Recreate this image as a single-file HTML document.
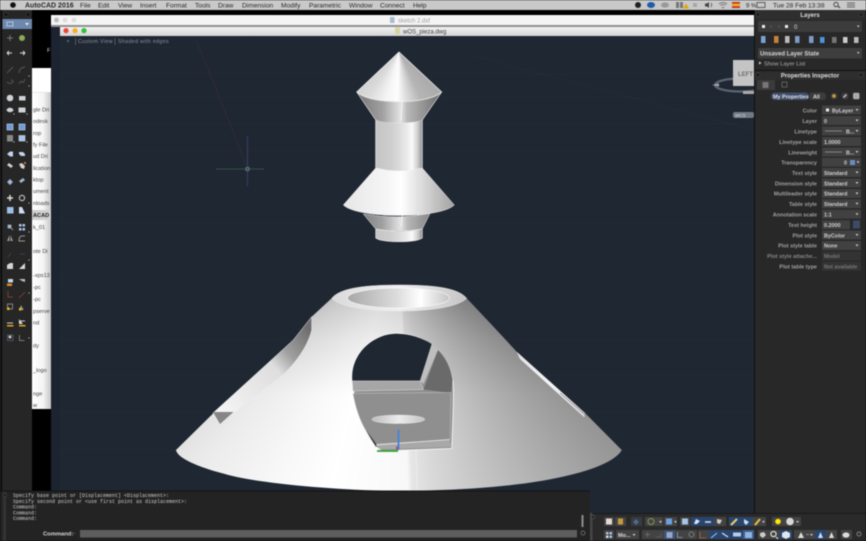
<!DOCTYPE html>
<html><head><meta charset="utf-8"><style>
html,body{margin:0;padding:0;width:866px;height:541px;overflow:hidden;background:#000}
#w{position:absolute;left:0;top:0;width:866px;height:541px;overflow:hidden;filter:blur(.4px);font-family:"Liberation Sans",sans-serif}
.a{position:absolute;left:0;top:0;width:866px;height:541px}
svg{display:block}
text{font-family:"Liberation Sans",sans-serif}
</style></head><body><div id="w">
<svg class="a" width="866" height="541" viewBox="0 0 866 541">
<defs>
<linearGradient id="side" x1="0" x2="1" y1="0" y2="0"><stop offset="0" stop-color="#fff"/><stop offset=".6" stop-color="#f4f4f4"/><stop offset="1" stop-color="#c4c4c4"/></linearGradient>
<linearGradient id="tb" x1="0" x2="0" y1="0" y2="1"><stop offset="0" stop-color="#f2f2f2"/><stop offset="1" stop-color="#d4d4d4"/></linearGradient>
</defs>
<rect width="866" height="541" fill="#000"/>
<!-- menu bar -->
<rect width="866" height="10" fill="#c9c9c9"/>
<g font-size="6.6" fill="#2a2a2a">
<circle cx="13" cy="5" r="2.8" fill="#111"/>
<text x="25" y="7.5" font-weight="bold" font-size="7">AutoCAD 2016</text>
<text x="80" y="7.5">File</text><text x="98" y="7.5">Edit</text><text x="118" y="7.5">View</text><text x="140" y="7.5">Insert</text><text x="166" y="7.5">Format</text><text x="195" y="7.5">Tools</text><text x="218" y="7.5">Draw</text><text x="242" y="7.5">Dimension</text><text x="281" y="7.5">Modify</text><text x="309" y="7.5">Parametric</text><text x="349" y="7.5">Window</text><text x="380" y="7.5">Connect</text><text x="413" y="7.5">Help</text>
<text x="746" y="7.5" font-size="6">9 %</text><text x="773" y="7.5">Tue 28 Feb</text><text x="808" y="7.5">13:38</text>
</g>
<circle cx="638" cy="5" r="3" fill="#222"/><ellipse cx="651" cy="5" rx="4" ry="3" fill="#1d5fa8"/><ellipse cx="665" cy="5" rx="4" ry="2.6" fill="#999"/>
<rect x="676" y="2" width="3" height="6" fill="#777"/><rect x="680" y="2" width="3" height="6" fill="#777"/><path d="M683 8.5L686 3.5 689 8.5Z" fill="#e0a800"/>
<path d="M693 4h4M693 6h4" stroke="#888"/><path d="M705 3.5h2l2-1.5v6l-2-1.5h-2z" fill="#444"/><path d="M711 3q1.5 2 0 4" fill="none" stroke="#444" stroke-width=".7"/>
<path d="M719 4q4-3 8 0M720.5 5.5q2.5-2 5 0M722 7l1 1 1-1" fill="none" stroke="#666" stroke-width=".8"/>
<rect x="732" y="2" width="8" height="6" fill="#c8302a"/><rect x="732" y="3.7" width="8" height="2.5" fill="#e8b820"/>
<rect x="757" y="2.5" width="8" height="5" fill="none" stroke="#444" stroke-width=".8"/>
<circle cx="836" cy="4.5" r="2.2" fill="none" stroke="#333" stroke-width=".8"/><path d="M838 6l2 2" stroke="#333"/><path d="M847 3h8M847 5h8M847 7h8" stroke="#666"/>
<!-- left sidebar window -->
<rect x="32" y="68" width="19" height="341" fill="url(#side)"/>
<rect x="32" y="68" width="19" height="24" fill="#fff"/><rect x="32" y="92" width="19" height=".6" fill="#ddd"/>
<rect x="32" y="210" width="19" height="10" fill="#d0d0d0"/>
<text x="47" y="52" font-size="5.500" fill="#ddd">F</text>
<g font-size="5.600" fill="#444">
<text x="33" y="111.500">gle Dri</text><text x="33" y="123">odesk</text><text x="33" y="135">rop</text><text x="33" y="146.500">fy File</text><text x="33" y="158">ud Dri</text><text x="33" y="170">lication</text><text x="33" y="181.500">ktop</text><text x="33" y="193">ument</text><text x="33" y="205">nloads</text><text x="33" y="217" fill="#222" font-weight="bold">ACAD</text><text x="33" y="229">k_01</text><text x="33" y="253">ote Di</text><text x="33" y="277">-xps13</text><text x="33" y="289">-pc</text><text x="33" y="301">-pc</text><text x="33" y="313">pserve</text><text x="33" y="324.500">nd</text><text x="33" y="347.500">dy</text><text x="33" y="372">_logo</text><text x="33" y="395.500">nge</text><text x="33" y="407">w</text>
</g>
<!-- canvas -->
<rect x="51" y="36" width="703" height="477" fill="#1f2733"/>
<rect x="51" y="15" width="9" height="476" fill="#1b2430"/>
<rect x="51" y="15" width="703" height="10" fill="#f4f4f4"/>
<rect x="51" y="25" width="703" height="2" fill="#8f8f8f"/>
<rect x="60" y="27" width="694" height="9" fill="url(#tb)"/>
<circle cx="56.500" cy="20" r="2.400" fill="#bbb"/><circle cx="65" cy="20" r="2.400" fill="#ddd"/><circle cx="74" cy="20" r="2.400" fill="#ddd"/>
<circle cx="66" cy="30.600" r="2.600" fill="#f0443c"/><circle cx="75" cy="30.600" r="2.600" fill="#f5b021"/><circle cx="84" cy="30.600" r="2.600" fill="#2fc23c"/>
<rect x="390" y="17" width="4.500" height="6" fill="#a9bccb"/>
<text x="398" y="22.300" font-size="6" fill="#a0a0a0">sketch 2.dxf</text>
<rect x="395" y="27.500" width="5" height="6.500" fill="#d8d2a0"/>
<text x="403" y="33.400" font-size="6" fill="#444">wOS_pieza.dwg</text>
<g stroke="#27303c" stroke-width=".5"><path d="M60 48H754M60 74H754M60 98H754M60 124H754M60 150H754M60 222H754M60 340H754M60 375H754M60 412H754M60 450H754M470 55L754 130M60 280H754"/></g>
<path d="M196 40Q225 110 246 165" stroke="#3a2b33" fill="none" stroke-width=".7"/>
<g font-size="5.300" fill="#8e949c" letter-spacing=".35"><text x="78" y="43">Custom View</text><text x="118" y="43">Shaded with edges</text></g>
<path d="M66.500 41h3M68 39.500v3M75.500 38v7M115 38v7" stroke="#777" stroke-width=".6"/>
<path d="M216 169H264" stroke="#3c5c47" stroke-width=".7"/><path d="M247.500 136V186" stroke="#3a4a76" stroke-width=".8"/><rect x="246" y="167.500" width="3" height="3" fill="none" stroke="#aab" stroke-width=".5"/>
<!-- view cube -->
<ellipse cx="740" cy="85" rx="25" ry="6.500" fill="none" stroke="#5d6570" stroke-width="2.200"/>
<path d="M712 85l7-1.500v3z" fill="#aaa"/><rect x="743" y="91" width="11" height="3" fill="#aaa"/>
<rect x="733" y="60" width="21" height="26" fill="#c4c4c4"/>
<text x="745.500" y="76" font-size="6" font-weight="bold" fill="#6e6e6e" text-anchor="middle">LEFT</text>
<rect x="733" y="112" width="21" height="6" rx="2" fill="#707a84"/><text x="735" y="117" font-size="4.500" fill="#ddd">WCS</text>
<!-- left toolbar -->
<rect x="2" y="10" width="30" height="481" fill="#262626"/>
<rect x="0" y="10" width="1" height="481" fill="#2a2a2a"/>
<circle cx="6" cy="14.500" r="2" fill="#111" stroke="#444" stroke-width=".5"/><circle cx="28" cy="14.500" r="2" fill="#111" stroke="#444" stroke-width=".5"/>
<rect x="2.500" y="19" width="29.500" height="10" fill="#6d87ad"/><rect x="7" y="22" width="6" height="4" fill="none" stroke="#cde" stroke-width=".7"/><path d="M25 23h4l-2 2.500z" fill="#eee"/>
<g fill="none" stroke-width="1">
<path d="M7 38h6M10 35v6" stroke="#777"/><circle cx="22" cy="38" r="3" fill="#8ea85c"/>
<path d="M7 53h5M7 53l2-2M7 53l2 2" stroke="#ddd"/><path d="M25 53h-5M25 53l-2-2M25 53l-2 2" stroke="#ddd"/>
<path d="M7 73l6-6M19 73q0-5 6-6M7 82q3 3 6 0 0-2-2-2M19 84q2-4 3-2t3-3" stroke="#555"/>
</g>
<g fill="#cfd3d8"><circle cx="10" cy="98" r="3.300"/><rect x="19" y="96" width="6.500" height="4.500"/><ellipse cx="10" cy="110" rx="3.400" ry="2.200"/><rect x="18.500" y="107.500" width="7" height="5"/></g>
<g fill="#6f9bd6" stroke="#c7dbf2" stroke-width=".6"><rect x="7" y="124" width="6" height="6"/><rect x="19" y="124" width="6" height="6"/><rect x="19" y="135.500" width="6" height="5.500" fill="#a8c4e6"/></g>
<rect x="7" y="135" width="6" height="6.500" fill="#888"/>
<path d="M7 154l3-2.500h3v5h-3zM19 152h4l2 2v2h-4l-2-2z" fill="#c2d3ea"/><path d="M7 165l2-2 4 3-2 2zM19 164l3-1 3 3-1 3-3-1z" fill="#d0d0d0"/><circle cx="25" cy="163" r="1" fill="#d89a2a"/>
<path d="M7 182l3-3 3 3-3 3zM19 181l4-3 2 2-4 3z" fill="#9fb6d4"/>
<path d="M10 195v6M7 198h6" stroke="#ddd" stroke-width="1.500"/><circle cx="22" cy="198" r="2.600" fill="none" stroke="#bbb" stroke-width="1.200"/>
<rect x="7" y="207" width="6.500" height="6.500" fill="#9cc0e6"/><path d="M19 207h3l3 6.500h-6z" fill="#cfdced"/>
<path d="M8 225h3v3H8zM11 228l2 2" stroke="#ccc" fill="#8fb4dc" stroke-width=".6"/><g fill="#a9c6ea"><rect x="19" y="224" width="2.500" height="2.500"/><rect x="22.500" y="224" width="2.500" height="2.500"/><rect x="19" y="228" width="2.500" height="2.500"/><rect x="22.500" y="228" width="2.500" height="2.500"/></g>
<path d="M7 241l2.500-6v6zM10.500 241v-6l2.500 6z" fill="#999"/><path d="M25 236h-3q-3 0-3 5h6" fill="none" stroke="#999"/>
<path d="M8 257l3-4M20 254h5" stroke="#30415c"/>
<path d="M7 269v-4l3-2h3v6z" fill="#d4d4d4"/><path d="M19 269l6-6v6z" fill="#dadada"/>
<rect x="8" y="279" width="5" height="3.500" fill="#c8d6ea"/><rect x="7" y="283.500" width="5" height="2.500" fill="#dd8a28"/><path d="M19 279h6v3l-3-1z" fill="#bbb"/>
<path d="M8 291v6h5" stroke="#7a3a34" fill="none"/><path d="M19 298l6-6" stroke="#7a3a34"/>
<rect x="7.500" y="304" width="5" height="5" fill="none" stroke="#aaa" stroke-width=".7"/><rect x="7" y="307.500" width="2.500" height="2.500" fill="#ecb91e"/><path d="M19 310l2-5 3 5z" fill="#888"/><rect x="19" y="308" width="2.500" height="2.500" fill="#ecb91e"/>
<path d="M7 323h6M19 321h6" stroke="#ccc"/><rect x="7" y="325" width="6.500" height="1.500" fill="#e8a41c"/><rect x="19" y="325" width="6.500" height="1.500" fill="#e8a41c"/><path d="M19 324v-5l4 5z" fill="#ddd"/>
<rect x="7.500" y="335" width="5.500" height="5.500" fill="none" stroke="#667" stroke-width=".7"/><circle cx="10" cy="337" r="1.500" fill="#bcd"/><path d="M19.500 335v5.500h5" fill="none" stroke="#777"/>
<g fill="#ccc"><circle cx="29" cy="76" r=".6"/><circle cx="29" cy="86" r=".6"/><circle cx="14" cy="114" r=".6"/><circle cx="27" cy="114" r=".6"/><circle cx="14" cy="142" r=".6"/><circle cx="27" cy="142" r=".6"/><circle cx="29" cy="203" r=".6"/><circle cx="29" cy="232" r=".6"/><circle cx="29" cy="260" r=".6"/><circle cx="29" cy="293" r=".6"/><circle cx="29" cy="338" r=".6"/></g>
</svg>

<!-- conic shaded cones -->
<div class="a" style="clip-path:path('M399 52L441.700 92C428 105 370 105 356.700 92Z');background:conic-gradient(from 130deg at 399px 52px,#a9a9a9 0deg,#b5b5b5 25deg,#e0e0e0 42deg,#fdfdfd 52deg,#f5f5f5 65deg,#dadada 85deg,#d0d0d0 100deg)"></div>
<div class="a" style="clip-path:path('M331.700 298.300L311.700 316.700L293.300 340L213.300 413.300L176 450C177 456 190 466 237 477C270 484 340 490.700 400 490.700C470 490.700 530 485 570 475C600 468 618 458 621.700 450L585 413L516.700 351.700L490 323L466.700 298.300Z');background:linear-gradient(180deg,rgba(0,0,0,.16) 295px,rgba(0,0,0,.07) 340px,rgba(0,0,0,0) 395px),conic-gradient(from 130deg at 399px 232px,#8d8d8d 0deg,#a2a2a2 12deg,#bebebe 28deg,#d8d8d8 42deg,#e6e6e6 47deg,#f8f8f8 48deg,#fff 65deg,#f9f9f9 75deg,#ececec 90deg,#dcdcdc 100deg)"></div>

<svg class="a" width="866" height="541" viewBox="0 0 866 541">
<defs>
<linearGradient id="cyl" gradientUnits="userSpaceOnUse" x1="375.700" x2="422.300" y1="0" y2="0"><stop offset="0" stop-color="#c4c4c4"/><stop offset=".35" stop-color="#cfcfcf"/><stop offset=".65" stop-color="#e8e8e8"/><stop offset=".78" stop-color="#fafafa"/><stop offset=".9" stop-color="#cfcfcf"/><stop offset="1" stop-color="#8f8f8f"/></linearGradient>
<linearGradient id="dk" gradientUnits="userSpaceOnUse" x1="357" x2="441" y1="0" y2="0"><stop offset="0" stop-color="#777"/><stop offset=".3" stop-color="#a0a0a0"/><stop offset=".52" stop-color="#e4e4e4"/><stop offset=".6" stop-color="#b8b8b8"/><stop offset="1" stop-color="#6c6c6c"/></linearGradient>
<linearGradient id="wd" gradientUnits="userSpaceOnUse" x1="343" x2="455" y1="0" y2="0"><stop offset="0" stop-color="#e6e6e6"/><stop offset=".4" stop-color="#f6f6f6"/><stop offset=".52" stop-color="#fff"/><stop offset=".72" stop-color="#d8d8d8"/><stop offset="1" stop-color="#a0a0a0"/></linearGradient>
<linearGradient id="hole" gradientUnits="userSpaceOnUse" x1="348" x2="449" y1="0" y2="0"><stop offset="0" stop-color="#a8a8a8"/><stop offset=".5" stop-color="#dedede"/><stop offset=".72" stop-color="#fff"/><stop offset="1" stop-color="#c4c4c4"/></linearGradient>
<linearGradient id="top" gradientUnits="userSpaceOnUse" x1="332" x2="467" y1="0" y2="0"><stop offset="0" stop-color="#dadada"/><stop offset=".5" stop-color="#f0f0f0"/><stop offset="1" stop-color="#c4c4c4"/></linearGradient>
<linearGradient id="el" gradientUnits="userSpaceOnUse" x1="372" x2="425" y1="0" y2="0"><stop offset="0" stop-color="#bdbdbd"/><stop offset=".5" stop-color="#ececec"/><stop offset="1" stop-color="#c2c2c2"/></linearGradient>
<linearGradient id="sl" gradientUnits="userSpaceOnUse" x1="215" x2="310" y1="415" y2="330"><stop offset="0" stop-color="#f6f6f6"/><stop offset=".6" stop-color="#dedede"/><stop offset=".75" stop-color="#a0a0a0"/><stop offset="1" stop-color="#6e6e6e"/></linearGradient>
<linearGradient id="rs" gradientUnits="userSpaceOnUse" x1="517" x2="585" y1="352" y2="416"><stop offset="0" stop-color="#e2e2e2"/><stop offset=".5" stop-color="#f4f4f4"/><stop offset="1" stop-color="#d6d6d6"/></linearGradient>
</defs>
<!-- upper part edges & cylinders -->
<path d="M399 52L441.700 92C428 105 370 105 356.700 92Z" fill="none" stroke="#f4f4f4" stroke-width=".7"/>
<path d="M356.700 92C370 105 428 105 441.700 92L422.300 120C415 124 383 124 375.700 120Z" fill="url(#dk)" stroke="#ededed" stroke-width=".6"/>
<path d="M375.700 120C383 124 415 124 422.300 120V170Q399 176 375.700 170Z" fill="url(#cyl)"/>
<path d="M375.700 120V170M422.300 120V170" stroke="#eee" stroke-width=".7"/>
<path d="M375.700 168Q399 174 422.300 168L454.300 205C440 219 358 219 343.300 205Z" fill="url(#wd)" stroke="#f2f2f2" stroke-width=".5"/>
<path d="M363.300 214Q397 220 430 213.500L422.300 229Q399 233 375.700 229Z" fill="url(#dk)" stroke="#eee" stroke-width=".5"/>
<path d="M375.700 229Q399 234 422.300 229V238C415 243 383 243 375.700 238Z" fill="url(#cyl)" stroke="#eee" stroke-width=".6"/>
<path d="M402.500 100L401 120M402.500 214L401.500 226" stroke="#fff" stroke-width=".6"/>
<!-- big cone top -->
<path d="M331.700 298.300C340 288 365 285 399 285C435 285 458 288 466.700 298.300C458 307 430 311 399 311C368 311 340 307 331.700 298.300Z" fill="url(#top)" stroke="#ececec" stroke-width=".5"/>
<ellipse cx="398.500" cy="298" rx="51" ry="10" fill="url(#hole)" stroke="#f8f8f8" stroke-width=".7"/>
<!-- left slot -->
<path d="M311.700 316.700L293.300 340L213 413L220 423.300L283 375C298 360 308 345 311.700 330Z" fill="url(#sl)" stroke="#f0f0f0" stroke-width=".5"/>
<path d="M213 412H233.500L220 424Z" fill="#868686"/>
<!-- right slot -->
<path d="M516.700 351.700L585 413V418L520 359Z" fill="url(#rs)"/><path d="M560 393L585 414.500V418" stroke="#7a7a7a" stroke-width=".6" fill="none"/>
<!-- arch -->
<path d="M352.300 378C350 355 372 333.300 396.700 333.300C425 333.300 452 355 453.300 386.700C453.800 405 452.500 425 451.700 448.500L382 451L376 446.700C362 430 354 405 352.300 378Z" fill="#8f8f8f" stroke="#f6f6f6" stroke-width=".9"/>
<path d="M352.300 380.700C350 355 372 333.800 396.700 333.800C410 333.800 422 338 431.700 344L420 380.700Z" fill="#1f2733"/>
<path d="M352.300 381H420L423.500 389.500L353 391Z" fill="#a6a6a6" stroke="#dcdcdc" stroke-width=".5"/>
<path d="M431.700 344L438 350L423.500 384L420 380.700Z" fill="#bebebe"/>
<path d="M438 350Q450 362 452.600 380L451 393L423.500 389.500Z" fill="#6a6a6a"/>
<path d="M353 393.500L451 392.500L450 440L376.500 444C362 430 356 410 353 393.500Z" fill="#8f8f8f" stroke="#d2d2d2" stroke-width=".4"/>
<path d="M366 430L377 445L376 447Z" fill="#333"/>
<path d="M376 445L449.500 439.500L451.700 447L380 449.500Z" fill="#a8a8a8"/><path d="M376 445L449.500 439.500" stroke="#ececec" stroke-width=".8"/>
<ellipse cx="398.300" cy="419.300" rx="26.500" ry="4.300" fill="url(#el)" stroke="#f0f0f0" stroke-width=".4"/>
<path d="M416 450L417 490" stroke="#fff" stroke-width=".5" opacity=".7"/>
<!-- ucs -->
<path d="M398.500 430V450" stroke="#3f83e0" stroke-width="1.800"/><path d="M377 451H398" stroke="#2fa02f" stroke-width="1.800"/><path d="M397 446.500V450" stroke="#c43a30" stroke-width="1.400"/><path d="M397 424H402" stroke="#6c9ad8" stroke-width=".6"/>
<!-- command panel -->
<rect x="0" y="491" width="590" height="50" fill="#232323"/>
<rect x="0" y="490.500" width="590" height="1" fill="#141414"/>
<rect x="3" y="492" width="3" height="49" fill="#333"/><circle cx="5" cy="495" r="1.800" fill="#222" stroke="#555" stroke-width=".4"/>
<g font-size="5" fill="#cfcfcf">
<text x="13" y="497" style="font-family:'Liberation Mono',monospace">Specify base point or [Displacement] &lt;Displacement&gt;:</text>
<text x="13" y="502.800" style="font-family:'Liberation Mono',monospace">Specify second point or &lt;use first point as displacement&gt;:</text>
<text x="13" y="508.600" style="font-family:'Liberation Mono',monospace">Command:</text>
<text x="13" y="514.500" style="font-family:'Liberation Mono',monospace">Command:</text>
<text x="13" y="520.200" style="font-family:'Liberation Mono',monospace">Command:</text>
</g>
<text x="43" y="535.500" font-size="5.800" font-weight="bold" fill="#d8d8d8">Command:</text>
<path d="M73 533.500h2.500" stroke="#666" stroke-width=".6"/>
<rect x="80" y="530" width="497" height="7.500" fill="#5d5d5d"/>
<rect x="581.500" y="515" width="2" height="12" fill="#8d8d8d"/>
<circle cx="583" cy="533" r="2" fill="none" stroke="#777" stroke-width=".8"/>
</svg>

<svg class="a" width="866" height="541" viewBox="0 0 866 541">
<!-- right panel -->
<rect x="754" y="10" width="112" height="503" fill="#282828"/>
<rect x="754" y="10" width="1" height="503" fill="#111"/>
<rect x="755" y="10" width="111" height="10" fill="#2e2e2e"/>
<circle cx="758" cy="14.500" r="2" fill="#1c1c1c" stroke="#4a4a4a" stroke-width=".5"/><circle cx="861" cy="14.500" r="2" fill="#1c1c1c" stroke="#4a4a4a" stroke-width=".5"/>
<text x="810" y="17" font-size="6" font-weight="bold" fill="#dedede" text-anchor="middle">Layers</text>
<rect x="758" y="21" width="104" height="11" rx="1" fill="#3c3c3c"/>
<rect x="762" y="25" width="3" height="3" fill="#eee"/><circle cx="771" cy="26.500" r="1.500" fill="#4a4a4a"/><circle cx="779" cy="26.500" r="1.500" fill="#4a4a4a"/><rect x="785" y="25" width="3" height="3" fill="#eee"/>
<text x="794" y="29" font-size="6" fill="#ddd">0</text><path d="M857 25.500h2.500l-1.250 2z" fill="#ccc"/>
<g>
<rect x="761" y="36" width="4.500" height="7" fill="#7aa2d8"/><rect x="774" y="36" width="4.500" height="7" fill="#c8813c"/><rect x="785" y="36" width="4.500" height="7" fill="#bbb"/><rect x="795" y="36" width="4.500" height="7" fill="#7c9cc8"/><rect x="809" y="36" width="4.500" height="7" fill="#7c9cc8"/><rect x="820" y="37" width="4.500" height="6" fill="#4f92de"/><rect x="832" y="37" width="4.500" height="6" fill="#777"/><rect x="843" y="37" width="4.500" height="6" fill="#ccc"/><rect x="854" y="37" width="4.500" height="6" fill="#bbb"/>
</g>
<rect x="758" y="48" width="104" height="10.500" rx="1" fill="#3e3e3e"/>
<text x="760" y="55.500" font-size="6" font-weight="bold" fill="#d4d4d4">Unsaved Layer State</text><path d="M857 52h2.500l-1.250 2z" fill="#ccc"/>
<path d="M759 61.500l2.500 1.500-2.500 1.500z" fill="#ccc"/>
<text x="764" y="65.500" font-size="5.800" fill="#b0b0b0">Show Layer List</text>
<rect x="755" y="70" width="111" height="1" fill="#111"/>
<rect x="755" y="71" width="111" height="9" fill="#2e2e2e"/>
<circle cx="758" cy="75" r="2" fill="#1c1c1c" stroke="#4a4a4a" stroke-width=".5"/><circle cx="861" cy="75" r="2" fill="#1c1c1c" stroke="#4a4a4a" stroke-width=".5"/>
<text x="810" y="77.500" font-size="6" font-weight="bold" fill="#dedede" text-anchor="middle">Properties Inspector</text>
<rect x="757" y="80" width="18" height="10" fill="#3b3b3b"/><rect x="762.500" y="82" width="6" height="6" fill="#777"/><rect x="782" y="82" width="5" height="5" fill="none" stroke="#777" stroke-width=".7"/>
<rect x="771" y="92.500" width="38" height="7.500" rx="3.700" fill="#3f4d68"/><rect x="809" y="92.500" width="17" height="7.500" rx="3" fill="#3c3c3c"/>
<text x="773" y="98.300" font-size="5.400" font-weight="bold" fill="#dfe4ec">My Properties</text><text x="813" y="98.300" font-size="5.400" font-weight="bold" fill="#ddd">All</text>
<circle cx="834" cy="96" r="3.300" fill="#444"/><rect x="832.500" y="94.500" width="3" height="3" fill="#d8a23c"/><circle cx="845" cy="96" r="3.300" fill="#444"/><path d="M843.500 97.500l3-3" stroke="#eee"/><rect x="853" y="92.800" width="6.500" height="6.500" rx="1.500" fill="#aaa"/>
<g font-size="5.500" font-weight="bold" fill="#a0a0a0" text-anchor="end">
<text x="817" y="112.500">Color</text><text x="817" y="123">Layer</text><text x="817" y="133.500">Linetype</text><text x="817" y="143.800">Linetype scale</text><text x="817" y="154.300">Lineweight</text><text x="817" y="164.500">Transparency</text><text x="817" y="175">Text style</text><text x="817" y="185.300">Dimension style</text><text x="817" y="195.700">Multileader style</text><text x="817" y="206">Table style</text><text x="817" y="216.300">Annotation scale</text><text x="817" y="227">Text height</text><text x="817" y="237.300">Plot style</text><text x="817" y="247.700">Plot style table</text>
<text x="817" y="258" fill="#868686">Plot style attache...</text><text x="817" y="268.300">Plot table type</text></g>
<g fill="#414141"><rect x="822" y="105.500" width="39" height="9"/><rect x="822" y="116" width="39" height="9"/><rect x="822" y="126.500" width="39" height="9"/><rect x="822" y="137" width="39" height="9"/><rect x="822" y="147.500" width="39" height="9"/><rect x="822" y="157.700" width="24" height="9"/><rect x="846" y="157.700" width="15" height="9"/><rect x="822" y="168" width="39" height="9"/><rect x="822" y="178.500" width="39" height="9"/><rect x="822" y="189" width="39" height="9"/><rect x="822" y="199.200" width="39" height="9"/><rect x="822" y="209.700" width="39" height="9"/><rect x="822" y="220.200" width="28" height="9"/><rect x="822" y="230.500" width="39" height="9"/><rect x="822" y="241" width="39" height="9"/></g>
<g fill="#333"><rect x="822" y="251.500" width="39" height="9"/><rect x="822" y="261.700" width="39" height="9"/></g>
<g font-size="5.400" font-weight="bold" fill="#cfcfcf">
<rect x="826" y="108.500" width="3" height="3" fill="#eee"/><text x="832" y="112.500">ByLayer</text><text x="824" y="123">0</text><text x="846" y="133.500">B...</text><text x="824" y="143.800">1.0000</text><text x="846" y="154.300">B...</text><text x="844" y="164.500">0</text><text x="824" y="175">Standard</text><text x="824" y="185.300">Standard</text><text x="824" y="195.700">Standard</text><text x="824" y="206">Standard</text><text x="824" y="216.300">1:1</text><text x="824" y="227">0.2000</text><text x="824" y="237.300">ByColor</text><text x="824" y="247.700">None</text>
<text x="824" y="258" fill="#777">Model</text><text x="824" y="268.300" fill="#777">Not available</text></g>
<path d="M825 131h17M825 152h17" stroke="#ccc" stroke-width=".6"/>
<rect x="850" y="160" width="5" height="5" fill="#6c8cc0"/><rect x="853" y="220.500" width="7" height="8" fill="#3c4c66"/>
<g fill="#ccc"><path d="M855.500 109h3l-1.500 2z"/><path d="M855.500 119.500h3l-1.500 2z"/><path d="M855.500 130h3l-1.500 2z"/><path d="M855.500 151h3l-1.500 2z"/><path d="M856.500 161.200h3l-1.500 2z"/><path d="M855.500 171.500h3l-1.500 2z"/><path d="M855.500 182h3l-1.500 2z"/><path d="M855.500 192.500h3l-1.500 2z"/><path d="M855.500 202.700h3l-1.500 2z"/><path d="M855.500 213.200h3l-1.500 2z"/><path d="M855.500 234h3l-1.500 2z"/><path d="M855.500 244.500h3l-1.500 2z"/></g>
<!-- status bar -->
<rect x="590" y="513" width="276" height="28" fill="#2a2a2a"/>
<rect x="590" y="513" width="276" height=".8" fill="#151515"/>
<rect x="590" y="513" width="2.500" height="28" fill="#454545"/>
<circle cx="593" cy="517" r="1.800" fill="#222" stroke="#666" stroke-width=".5"/>
<g fill="#434343">
<rect x="604" y="517" width="10" height="9"/><rect x="615" y="517" width="11" height="9"/><rect x="631" y="517" width="11" height="9" fill="#363b44"/><rect x="645" y="517" width="18" height="9"/><rect x="664" y="517" width="13" height="9"/><rect x="680" y="517" width="10" height="9"/><rect x="691" y="517" width="11" height="9" fill="#29456f"/><rect x="702" y="517" width="12" height="9" fill="#29456f"/><rect x="714" y="517" width="12" height="9"/><rect x="729" y="517" width="12" height="9" fill="#29456f"/><rect x="741" y="517" width="11" height="9" fill="#29456f"/><rect x="752" y="517" width="14" height="9"/><rect x="772" y="517" width="12" height="9"/><rect x="784" y="517" width="17" height="9"/>
<rect x="604" y="530" width="10" height="9"/><rect x="616" y="530" width="23" height="9"/><rect x="642" y="530" width="11" height="9"/><rect x="653" y="530" width="11" height="9"/><rect x="664" y="530" width="11" height="9" fill="#3d5376"/><rect x="675" y="530" width="11" height="9"/><rect x="686" y="530" width="11" height="9"/><rect x="698" y="530" width="11" height="9"/><rect x="709" y="530" width="11" height="9" fill="#29456f"/><rect x="720" y="530" width="11" height="9" fill="#29456f"/><rect x="731" y="530" width="12" height="9" fill="#29456f"/><rect x="743" y="530" width="11" height="9" fill="#3d5f92"/>
<rect x="758" y="530" width="11" height="9"/><rect x="769" y="530" width="11" height="9"/><rect x="780" y="530" width="12" height="9" fill="#29456f"/><rect x="794" y="530" width="21" height="9"/><rect x="815" y="530" width="11" height="9" fill="#29456f"/><rect x="826" y="530" width="11" height="9"/><rect x="841" y="530" width="11" height="9"/></g>
<rect x="606" y="518.500" width="6" height="6" fill="#e8d8d8"/><rect x="618" y="518.500" width="5" height="6" fill="#c99a3c"/><path d="M633 522l3-3 3 3-3 3z" fill="#54688c"/>
<circle cx="651" cy="521.500" r="3" fill="none" stroke="#7a9a58"/><path d="M659 521h3l-1.500 2z" fill="#ccc"/>
<rect x="666" y="518.500" width="6" height="6" fill="#6ea0de"/><path d="M674 521h3l-1.500 2z" fill="#ccc"/><rect x="682" y="518.500" width="6" height="6" fill="#a6c4e8"/>
<path d="M694 524l2-5 4 2-3 3z" fill="#d8e4f4"/><path d="M705 522h6" stroke="#dde" stroke-width="1.500"/><path d="M717 519l5 1-2 4-3-1z" fill="#ccc"/>
<path d="M731 525l6-6" stroke="#f0d060" stroke-width="2"/><path d="M744 519l5 3-3 3-2-2z" fill="#cde"/><path d="M755 525l5-6" stroke="#e8c050" stroke-width="2"/><path d="M762 521h3l-1.500 2z" fill="#ccc"/>
<circle cx="778" cy="521.500" r="2.800" fill="#ffe600"/><circle cx="790" cy="521.500" r="3.800" fill="#d8d8d8"/><path d="M796 521h3l-1.500 2z" fill="#ccc"/>
<rect x="606" y="532" width="2.500" height="2.500" fill="#a9c6ea"/><rect x="609.500" y="532" width="2.500" height="2.500" fill="#a9c6ea"/><rect x="606" y="535.500" width="2.500" height="2.500" fill="#ddd"/><rect x="609.500" y="535.500" width="2.500" height="2.500" fill="#a9c6ea"/>
<text x="618" y="537" font-size="5.500" font-weight="bold" fill="#ddd">Mo...</text><path d="M632.500 534h3l-1.500 2z" fill="#ccc"/>
<path d="M645 534.500h5M647.500 532v5" stroke="#777" stroke-width=".7"/><path d="M656 537h5v-4" stroke="#666" fill="none" stroke-width=".7"/><rect x="666.500" y="532" width="6" height="6" fill="#93a8c8"/><path d="M677.500 532v5.500h5" stroke="#8fa8c8" fill="none" stroke-width=".8"/><circle cx="691.500" cy="534.500" r="2.500" fill="none" stroke="#888" stroke-width=".8"/><path d="M700 532v6h6" stroke="#a65" fill="none" stroke-width=".8"/>
<path d="M711 538l6-5" stroke="#a8c4e6"/><path d="M722 533l6 4" stroke="#cde" stroke-width="1.300"/><rect x="733" y="532.500" width="8" height="4" fill="#b8cce4"/><rect x="745" y="532" width="7" height="6" fill="#8fb4e4"/>
<path d="M760 533l4-1 2 3-3 3-3-2z" fill="#ccc"/><circle cx="773.500" cy="534" r="2.600" fill="none" stroke="#eee" stroke-width="1.100"/><path d="M776 537l2 2" stroke="#eee"/><path d="M782 533l4-2 4 2v4l-4 2-4-2z" fill="#dfe6ee"/>
<path d="M798 538l3-6 3 6z" fill="#ddd"/><path d="M806 534.500h3" stroke="#888"/><path d="M810 534h3l-1.500 2z" fill="#ccc"/>
<path d="M818 538l2.500-6 2.500 6z" fill="#cde"/><path d="M829 538l2.500-6 2.500 6z" fill="#ddd"/>
<ellipse cx="846" cy="535" rx="3.500" ry="2.600" fill="#ddd"/><circle cx="859" cy="534" r="2" fill="none" stroke="#888" stroke-width=".9"/>
</svg>
</div></body></html>
